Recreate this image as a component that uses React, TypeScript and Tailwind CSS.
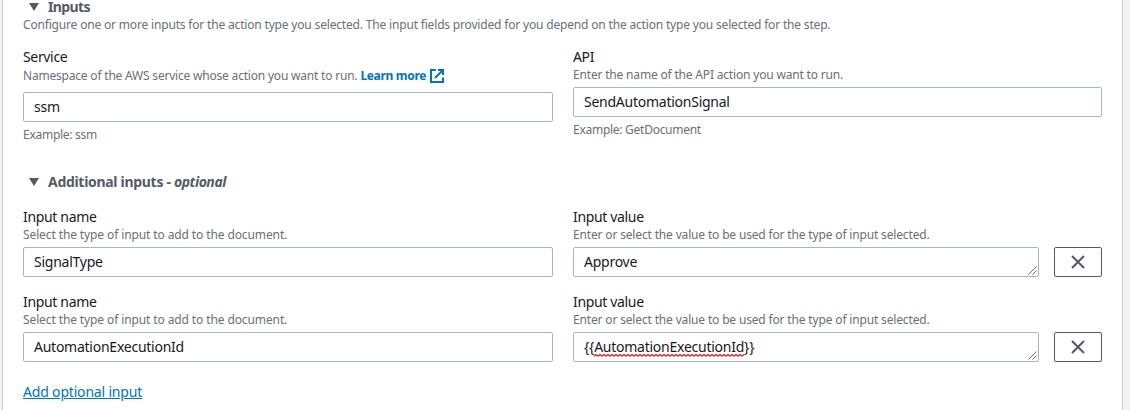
import React from "react";

function Caret() {
  return (
    <svg width="10" height="8" viewBox="0 0 10 8" className="ml-[6px] mr-[9px] shrink-0">
      <path d="M0 0h10L5 8z" fill="#545b64" />
    </svg>
  );
}

function ExternalIcon() {
  return (
    <svg width="14" height="14" viewBox="0 0 14 14" fill="none" stroke="#0073bb" strokeWidth="2" className="ml-1 shrink-0">
      <path d="M6 1H1v12h12V8.500M8 1H13v5M13 1L5 9" />
    </svg>
  );
}

function Label({ children }: { children: React.ReactNode }) {
  return <div className="h-[22px] text-[14px] leading-[22px] tracking-[-0.34px] text-[#16191f]">{children}</div>;
}

function Hint({ children }: { children: React.ReactNode }) {
  return <div className="mb-[5px] h-[14px] whitespace-nowrap text-[12px] leading-[14px] tracking-[-0.16px] text-[#687078]">{children}</div>;
}

function Example({ children }: { children: React.ReactNode }) {
  return <div className="mt-[5px] text-[12px] leading-4 tracking-[-0.27px] text-[#687078]">{children}</div>;
}

function Box({ children, resizable }: { children: React.ReactNode; resizable?: boolean }) {
  return (
    <div className="relative flex h-[30px] min-w-0 grow items-center rounded-[2px] border border-[#aab7b8] bg-white px-[10px] text-[14px] leading-[22px] tracking-[-0.25px] text-[#16191f]">
      {children}
      {resizable && (
        <svg width="9" height="9" viewBox="0 0 9 9" className="absolute right-[1px] bottom-[1px]" stroke="#545b64" strokeWidth="0.9">
          <path d="M0.500 8.500l8-8M4.500 8.500l4-4" />
        </svg>
      )}
    </div>
  );
}

function Misspelled({ children }: { children: React.ReactNode }) {
  return (
    <span className="relative inline-block">
      {children}
      <svg className="absolute bottom-[1px] left-0 h-[3px] w-full">
        <defs>
          <pattern id="wave" width="4" height="3" patternUnits="userSpaceOnUse">
            <path d="M0 2.250L2 0.500L4 2.250" fill="none" stroke="#ff0000" strokeWidth="1.100" />
          </pattern>
        </defs>
        <rect width="100%" height="3" fill="url(#wave)" />
      </svg>
    </span>
  );
}

function RemoveButton() {
  return (
    <button aria-label="Remove" className="ml-[15px] flex h-[30px] w-12 shrink-0 items-center justify-center rounded-[2px] border border-[#545b64] bg-white">
      <svg width="14" height="14" viewBox="0 0 14 14" stroke="#545b64" strokeWidth="2">
        <path d="M1 1l12 12M13 1L1 13" />
      </svg>
    </button>
  );
}

function InputRow({ name, value }: { name: string; value: React.ReactNode }) {
  return (
    <div className="grid grid-cols-[530px_529px] gap-5">
      <div>
        <Label>Input name</Label>
        <div className="tracking-normal">
          <Hint>
            <span className="tracking-[-0.11px]">Select the type of input to add to the document.</span>
          </Hint>
        </div>
        <Box>{name}</Box>
      </div>
      <div>
        <Label>Input value</Label>
        <Hint>Enter or select the value to be used for the type of input selected.</Hint>
        <div className="flex">
          <Box resizable>{value}</Box>
          <RemoveButton />
        </div>
      </div>
    </div>
  );
}

export default function App() {
  return (
    <div className="flex h-[410px] w-[1130px] overflow-hidden bg-[#f2f3f3] pl-[2px] font-['Noto_Sans',sans-serif]">
      <main className="w-[1121px] border-x border-[#c9cfcf] bg-white pl-5">
        <h2 className="flex h-[18px] items-center pb-1 text-[14px] leading-[14px] font-bold text-[#545b64]">
          <Caret />
          <span className="tracking-[-0.6px]">Inputs</span>
        </h2>
        <p className="h-[14px] text-[12px] leading-[14px] tracking-[-0.175px] whitespace-nowrap text-[#687078]">
          Configure one or more inputs for the action type you selected. The input fields provided for you depend on the action type you selected for the step.
        </p>
        <section className="mt-[14px] grid h-[97px] grid-cols-[530px_529px] gap-5">
          <div>
            <Label>Service</Label>
            <div className="mb-2 flex h-4 items-center text-[12px] leading-4 whitespace-nowrap text-[#687078]">
              <span className="tracking-[-0.2px]">Namespace of the AWS service whose action you want to run.</span>
              <a className="ml-[3px] flex items-center font-bold tracking-[-0.32px] text-[#0073bb]">
                Learn more
                <ExternalIcon />
              </a>
            </div>
            <Box>ssm</Box>
            <Example>Example: ssm</Example>
          </div>
          <div>
            <Label>API</Label>
            <Hint>
              <span className="tracking-[-0.18px]">Enter the name of the API action you want to run.</span>
            </Hint>
            <Box>SendAutomationSignal</Box>
            <Example>Example: GetDocument</Example>
          </div>
        </section>
        <h3 className="mt-7 mb-[13px] flex h-[22px] items-center text-[14px] leading-[22px] font-bold text-[#545b64]">
          <Caret />
          <span className="tracking-[-0.3px] whitespace-pre">Additional inputs - </span>
          <em className="tracking-[-0.45px]">optional</em>
        </h3>
        <div className="flex flex-col gap-[14px]">
          <InputRow name="SignalType" value="Approve" />
          <InputRow
            name="AutomationExecutionId"
            value={
              <span>
                {"{{"}
                <Misspelled>AutomationExecutionId</Misspelled>
                {"}}"}
              </span>
            }
          />
        </div>
        <a className="mt-[19px] block text-[14px] leading-[22px] tracking-[-0.18px] text-[#0073bb] underline">Add optional input</a>
      </main>
    </div>
  );
}
